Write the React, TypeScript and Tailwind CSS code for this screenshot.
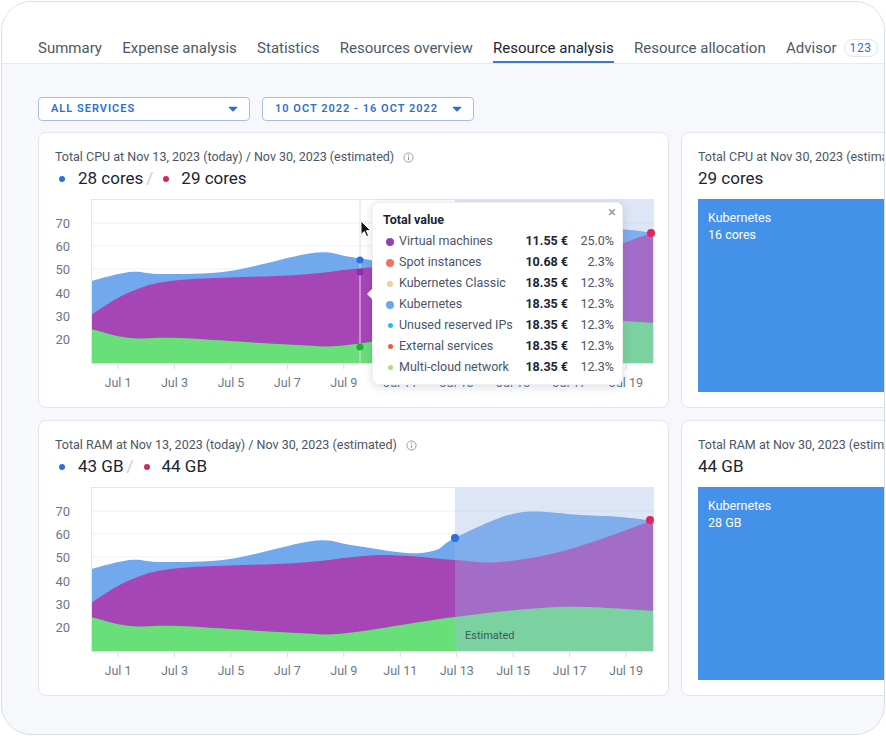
import React from "react";

type Pt = [number, number];

function curve(pts: Pt[]): string {
  let d = `M${pts[0][0]},${pts[0][1]}`;
  for (let i = 0; i < pts.length - 1; i++) {
    const p0 = pts[i - 1] || pts[i];
    const p1 = pts[i];
    const p2 = pts[i + 1];
    const p3 = pts[i + 2] || p2;
    const t = 1 / 6;
    const c1x = p1[0] + (p2[0] - p0[0]) * t;
    const c1y = p1[1] + (p2[1] - p0[1]) * t;
    const c2x = p2[0] - (p3[0] - p1[0]) * t;
    const c2y = p2[1] - (p3[1] - p1[1]) * t;
    d += ` C${c1x.toFixed(1)},${c1y.toFixed(1)} ${c2x.toFixed(1)},${c2y.toFixed(1)} ${p2[0]},${p2[1]}`;
  }
  return d;
}

const W = 563;
const H = 165;

function area(pts: Pt[]) {
  return curve(pts) + ` L${W},${H} L0,${H} Z`;
}

const BLUE: Pt[] = [
  [0, 82], [39, 73], [72, 75], [139, 72], [222, 54], [260, 58], [316, 66], [345, 63], [364, 51], [426, 26], [489, 28], [530, 30], [563, 34],
];
const PURPLE: Pt[] = [
  [0, 116], [39, 93], [89, 81], [206, 76], [289, 68], [364, 73], [409, 75], [476, 63], [563, 33],
];
const GREEN: Pt[] = [
  [0, 130], [39, 139], [89, 139], [206, 146], [256, 146], [364, 130], [469, 120], [563, 124],
];

const GRID = [
  { v: "70", y: 24 },
  { v: "60", y: 47 },
  { v: "50", y: 70 },
  { v: "40", y: 94 },
  { v: "30", y: 117 },
  { v: "20", y: 140 },
];

const XL = ["Jul 1", "Jul 3", "Jul 5", "Jul 7", "Jul 9", "Jul 11", "Jul 13", "Jul 15", "Jul 17", "Jul 19"];

function Chart({ hover }: { hover: boolean }) {
  const ox = 36;
  return (
    <svg width={600} height={196} className="block" style={{ fontFamily: "Roboto, sans-serif" }}>
      {GRID.map((g) => (
        <text key={g.v} x={15} y={g.y + 4.5} textAnchor="end" fontSize={13} fill="#6b788c">
          {g.v}
        </text>
      ))}
      <g transform={`translate(${ox},0)`}>
        <rect x={0} y={0} width={W} height={H} fill="#ffffff" />
        {GRID.map((g) => (
          <line key={g.v} x1={0} x2={W} y1={g.y} y2={g.y} stroke="#eef1f6" strokeWidth={1} />
        ))}
        <path d={area(BLUE)} fill="#71a8ee" />
        <path d={area(PURPLE)} fill="#a646b6" />
        <path d={area(GREEN)} fill="#69df79" />
        <rect x={364} y={0} width={W - 364} height={H} fill="rgb(157,183,232)" fillOpacity={0.35} />
        {!hover && (
          <text x={374} y={152} fontSize={11} fill="#3d5c5c">
            Estimated
          </text>
        )}
        <rect x={0.5} y={0.5} width={W - 1} height={H - 1} fill="none" stroke="#e2e7ee" strokeWidth={1} />
        {XL.map((l, i) => {
          const x = 27 + i * 56.45;
          return (
            <g key={l}>
              <line x1={x} x2={x} y1={H} y2={H + 5} stroke="#d5dbe4" strokeWidth={1} />
              <text x={x} y={188} textAnchor="middle" fontSize={12.5} fill="#6b788c">
                {l}
              </text>
            </g>
          );
        })}
        {hover ? (
          <>
            <line x1={269} x2={269} y1={0} y2={H} stroke="#e2d9ec" strokeWidth={1} />
            <circle cx={269} cy={61} r={3.5} fill="#2a6fdb" />
            <circle cx={269} cy={73} r={3.5} fill="#8e2fae" />
            <circle cx={269} cy={148} r={3.5} fill="#1fae3b" />
            <circle cx={560} cy={34} r={4} fill="#e0245e" />
          </>
        ) : (
          <>
            <circle cx={364} cy={51} r={4} fill="#2a6fdb" />
            <circle cx={559} cy={33} r={4} fill="#e0245e" />
          </>
        )}
      </g>
    </svg>
  );
}

function InfoIcon() {
  return (
    <svg width="11" height="11" viewBox="0 0 12 12" className="ml-[9px]">
      <circle cx="6" cy="6" r="5" fill="none" stroke="#8a95a6" strokeWidth="1" />
      <line x1="6" y1="5.2" x2="6" y2="8.6" stroke="#8a95a6" strokeWidth="1.1" />
      <circle cx="6" cy="3.5" r="0.7" fill="#8a95a6" />
    </svg>
  );
}

function Caret() {
  return (
    <svg width="10" height="6" viewBox="0 0 10 6">
      <path d="M1 0.8 H9 Q9.8 0.8 9.2 1.5 L5.6 5.2 Q5 5.8 4.4 5.2 L0.8 1.5 Q0.2 0.8 1 0.8 Z" fill="#2d6fd0" />
    </svg>
  );
}

const ROWS = [
  { c: "#9b3dbd", s: 8, l: "Virtual machines", v: "11.55 €", p: "25.0%" },
  { c: "#f2735b", s: 8, l: "Spot instances", v: "10.68 €", p: "2.3%" },
  { c: "#f7cc9e", s: 6, l: "Kubernetes Classic", v: "18.35 €", p: "12.3%" },
  { c: "#6ba6ef", s: 8, l: "Kubernetes", v: "18.35 €", p: "12.3%" },
  { c: "#22c0e4", s: 5, l: "Unused reserved IPs", v: "18.35 €", p: "12.3%" },
  { c: "#ee5a3b", s: 5, l: "External services", v: "18.35 €", p: "12.3%" },
  { c: "#a9e27d", s: 5, l: "Multi-cloud network", v: "18.35 €", p: "12.3%" },
];

function Tooltip() {
  return (
    <div className="absolute left-[333px] top-[69px] w-[251px] h-[183px] bg-white rounded-[7px] shadow-[0_2px_10px_rgba(30,50,90,0.16)] border border-[#edf0f4] pl-[10px] pr-[8px] pt-[8px]">
      <svg width="6" height="12" viewBox="0 0 6 12" className="absolute left-[-6px] top-[85px]">
        <path d="M6 0 L0 6 L6 12 Z" fill="#ffffff" />
      </svg>
      <div className="absolute right-[6px] top-[2px] text-[15px] leading-[15px] text-[#8c97a8]">×</div>
      <div className="text-[12.5px] leading-[18px] font-bold text-[#1b2433]">Total value</div>
      <div className="mt-[2px] flex flex-col">
        {ROWS.map((r) => (
          <div key={r.l} className="flex items-center h-[21px] text-[12.5px] whitespace-nowrap">
            <div className="w-[14px] shrink-0 flex justify-center">
              <div className="rounded-full" style={{ width: r.s, height: r.s, background: r.c }} />
            </div>
            <div className="ml-[2px] flex-1 min-w-0 text-[#4a5568]">{r.l}</div>
            <div className="w-[50px] shrink-0 text-right font-bold text-[#1b2433]">{r.v}</div>
            <div className="w-[46px] shrink-0 text-right text-[#4a5568]">{r.p}</div>
          </div>
        ))}
      </div>
    </div>
  );
}

function Cursor() {
  return (
    <svg width="12" height="18" viewBox="0 0 12 18" className="absolute left-[321px] top-[87px]">
      <path d="M1 1 L1 14.5 L4.3 11.5 L6.6 16.6 L8.6 15.7 L6.4 10.7 L10.8 10.7 Z" fill="#111" stroke="#fff" strokeWidth="1" strokeLinejoin="round" />
    </svg>
  );
}

function LeftCard({ kind }: { kind: "cpu" | "ram" }) {
  const cpu = kind === "cpu";
  return (
    <div className="relative w-[631px] h-[276px] shrink-0 bg-white rounded-[8px] border border-[#e0e5ec] px-[16px] pt-[16px]">
      <div className="flex items-center text-[12.5px] leading-[16px] text-[#4a5568]">
        <span>Total {cpu ? "CPU" : "RAM"} at Nov 13, 2023 (today) / Nov 30, 2023 (estimated)</span>
        <InfoIcon />
      </div>
      <div className="mt-[3px] flex items-center h-[22px] text-[17px] text-[#1b2433]">
        <div className="ml-[4px] w-[6px] h-[6px] rounded-full bg-[#2a6fdb]" />
        <span className="ml-[13px]">{cpu ? "28 cores" : "43 GB"}</span>
        <span className="ml-[3px] text-[#c6ccd6]">/</span>
        <div className="ml-[10px] w-[6px] h-[6px] rounded-full bg-[#d6285a]" />
        <span className="ml-[12px]">{cpu ? "29 cores" : "44 GB"}</span>
      </div>
      <div className="mt-[9px]">
        <Chart hover={cpu} />
      </div>
      {cpu && <Tooltip />}
      {cpu && <Cursor />}
    </div>
  );
}

function RightCard({ kind }: { kind: "cpu" | "ram" }) {
  const cpu = kind === "cpu";
  return (
    <div className="w-[400px] h-[276px] shrink-0 bg-white rounded-[8px] border border-[#e0e5ec] px-[16px] pt-[16px] pb-[15px] flex flex-col">
      <div className="text-[12.5px] leading-[16px] text-[#4a5568] whitespace-nowrap">
        Total {cpu ? "CPU" : "RAM"} at Nov 30, 2023 (estimated)
      </div>
      <div className="mt-[3px] h-[22px] flex items-center text-[17px] text-[#1b2433]">{cpu ? "29 cores" : "44 GB"}</div>
      <div className="mt-[9px] flex-1 bg-[#4491ea] px-[10px] pt-[10px] text-white text-[12.5px] leading-[17px]">
        <div>Kubernetes</div>
        <div>{cpu ? "16 cores" : "28 GB"}</div>
      </div>
    </div>
  );
}

const TABS = ["Summary", "Expense analysis", "Statistics", "Resources overview", "Resource analysis", "Resource allocation"];

export default function App() {
  return (
    <div className="w-[886px] h-[736px] bg-white p-[1px]" style={{ fontFamily: "Roboto, 'Noto Sans', sans-serif" }}>
      <div className="w-[884px] h-[734px] rounded-[30px] border border-[#d9dfe8] overflow-hidden bg-[#f6f8fb] flex flex-col">
        <div className="h-[62px] shrink-0 bg-white border-b border-[#e6eaf0] flex items-end pl-[36px] gap-[20.3px]">
          {TABS.map((t) => {
            const active = t === "Resource analysis";
            return (
              <div
                key={t}
                className={
                  active
                    ? "h-[25px] border-b-2 border-[#3b78d8] text-[15px] leading-[20px] text-[#1b2433] whitespace-nowrap"
                    : "h-[25px] border-b-2 border-transparent text-[15px] leading-[20px] text-[#4d5969] whitespace-nowrap"
                }
              >
                {t}
              </div>
            );
          })}
          <div className="h-[25px] flex items-start whitespace-nowrap">
            <span className="text-[15px] leading-[20px] text-[#4d5969]">Advisor</span>
            <span className="ml-[7px] mt-[1px] h-[18px] px-[5px] rounded-full border border-[#e0e5ee] text-[12px] leading-[16px] tracking-[0.6px] text-[#2f6fd0] bg-white">
              123
            </span>
          </div>
        </div>
        <div className="pl-[36px] pt-[33px] flex flex-col">
          <div className="flex gap-[12px]">
            <div className="w-[212px] h-[24px] rounded-[4px] border border-[#a7bfe8] bg-white flex items-center justify-between pl-[12px] pr-[11px]">
              <span className="text-[11px] font-semibold tracking-[1px] text-[#2d6fd0]">ALL SERVICES</span>
              <Caret />
            </div>
            <div className="w-[212px] h-[24px] rounded-[4px] border border-[#a7bfe8] bg-white flex items-center justify-between pl-[12px] pr-[11px]">
              <span className="text-[11px] font-semibold tracking-[1px] text-[#2d6fd0]">10 OCT 2022 - 16 OCT 2022</span>
              <Caret />
            </div>
          </div>
          <div className="mt-[11px] flex gap-[12px]">
            <LeftCard kind="cpu" />
            <RightCard kind="cpu" />
          </div>
          <div className="mt-[12px] flex gap-[12px]">
            <LeftCard kind="ram" />
            <RightCard kind="ram" />
          </div>
        </div>
      </div>
    </div>
  );
}
